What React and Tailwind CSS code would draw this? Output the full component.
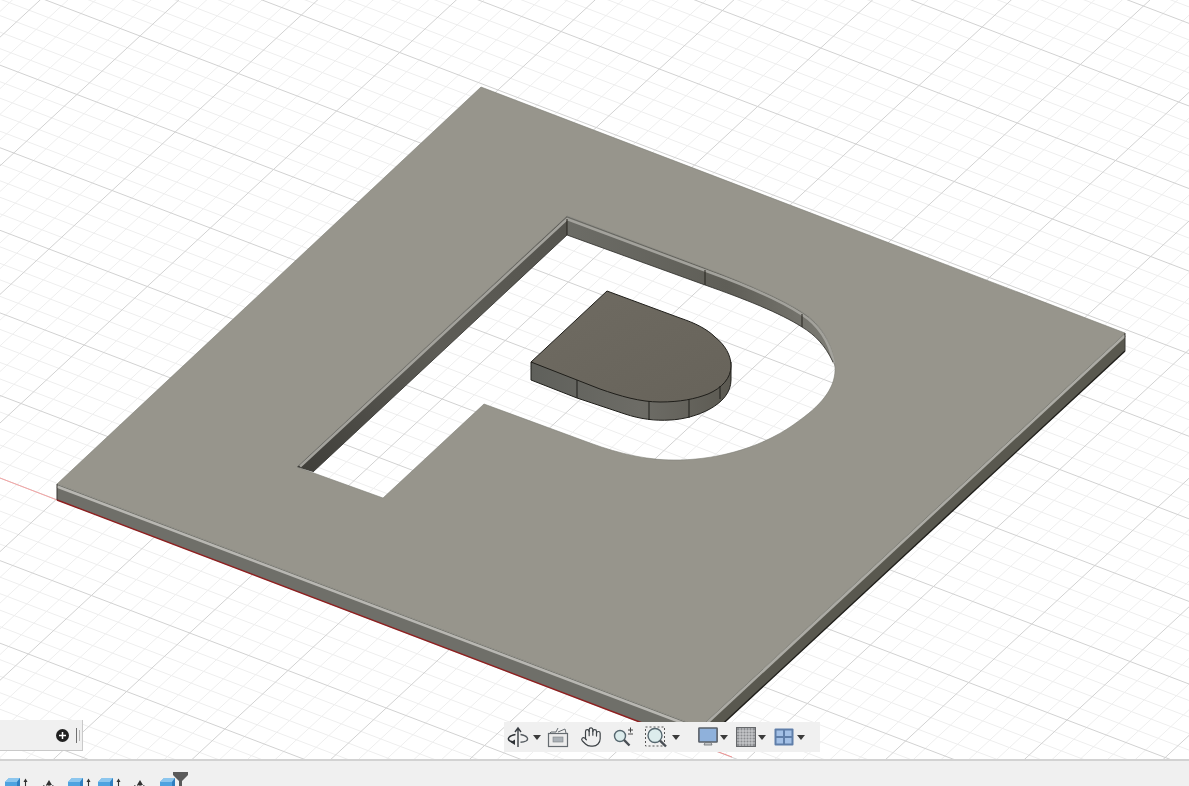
import React from 'react';
import { Hand } from 'lucide-react';

// grid fitted from the reference's major line crossings
const O = [140, 36];
const U = [98.28, 37.5];
const V = [-63.1, 58.5];

function gridLines() {
  const lines = [];
  const pt = (a, b) => [O[0] + U[0] * a + V[0] * b, O[1] + U[1] * a + V[1] * b];
  for (let i = -60; i <= 100; i++) {
    const t = i / 5;
    const major = i % 5 === 0;
    lines.push({ k: 'a' + i, p: [pt(t, -30), pt(t, 30)], major });
    lines.push({ k: 'b' + i, p: [pt(-30, t), pt(30, t)], major });
  }
  return lines;
}

function Scene() {
  const lines = gridLines();
  const plate =
    'M481,87 L1125,333 L700,727 L57,484 Z ' +
    'M567,216 L705,268 C745,283 780,298 802,312 C822,324 833,345 835,367 C836,385 825,402 800,420 C765,447 720,459 680,460 C650,461 620,454 590,443 L484,404 L383,498 L297,467 Z';
  return (
    <svg className="absolute inset-0 blur-[0.4px]" width="1189" height="759" viewBox="0 0 1189 759">
      <defs>
        <linearGradient id="leftWall" x1="0" y1="1" x2="1" y2="0">
          <stop offset="0" stopColor="#3f3e39" />
          <stop offset="0.5" stopColor="#5d5c56" />
          <stop offset="1" stopColor="#55544e" />
        </linearGradient>
        <linearGradient id="topWall" x1="0" y1="0" x2="1" y2="0">
          <stop offset="0" stopColor="#6c6c66" />
          <stop offset="0.6" stopColor="#5f5e57" />
          <stop offset="1" stopColor="#7d7c75" />
        </linearGradient>
        <linearGradient id="islandTop" x1="0" y1="0" x2="1" y2="1">
          <stop offset="0" stopColor="#6f6b62" />
          <stop offset="1" stopColor="#67635a" />
        </linearGradient>
        <linearGradient id="islandSide" x1="0" y1="0" x2="1" y2="0">
          <stop offset="0" stopColor="#5f605b" />
          <stop offset="0.55" stopColor="#6d6c66" />
          <stop offset="1" stopColor="#5c5a52" />
        </linearGradient>
      </defs>

      {lines.filter((l) => !l.major).map((l) => (
        <line key={l.k} x1={l.p[0][0]} y1={l.p[0][1]} x2={l.p[1][0]} y2={l.p[1][1]} stroke="#eeeeee" strokeWidth="1" />
      ))}
      {lines.filter((l) => l.major).map((l) => (
        <line key={l.k} x1={l.p[0][0]} y1={l.p[0][1]} x2={l.p[1][0]} y2={l.p[1][1]} stroke="#d2d2d2" strokeWidth="1" />
      ))}

      {/* red axis */}
      <line x1="0" y1="478" x2="57" y2="500" stroke="#f6a5a5" strokeWidth="1" />
      <line x1="700" y1="745" x2="732" y2="757" stroke="#f09090" strokeWidth="1" />

      {/* plate with the P cut out */}
      <path d="M57,484 L700,727 L700,745 L57,500 Z" fill="#6f6f69" />
      <path d="M1125,333 L700,727 L700,745 L1125,351 Z" fill="#59584f" />
      <path d={plate} fill="#97958c" fillRule="evenodd" stroke="#7e7d76" strokeWidth="0.6" />
      <path d="M57,486.500 L700,729.500" fill="none" stroke="#b8b7b2" strokeWidth="2.600" />
      <path d="M700,729.500 L1125,335.500" fill="none" stroke="#acaba5" strokeWidth="2.600" />
      <path d="M57,500 L700,745" stroke="#8e1f1f" strokeWidth="1.400" />
      <path d="M700,745 L1125,351" stroke="#1f1e1a" strokeWidth="1.400" />
      <path d="M57,484 L57,500 M1125,333 L1125,351" stroke="#3a3934" strokeWidth="1" />

      {/* hole walls */}
      <path d="M297,467 L567,216 L567,235 L313,472 Z" fill="url(#leftWall)" />
      <path d="M567,216 L705,268 C745,283 780,298 802,312 C822,324 833,345 835,367 L833,362 C825,345 815,335 802,327 C780,313 745,299 705,285 L567,235 Z" fill="url(#topWall)" />
      <path d="M300,466.500 L567,219 L705,270.500 C745,285 780,300 802,314.500 C820,326 830,345 834,363" fill="none" stroke="#a3a29c" strokeWidth="2.600" />
      <path d="M567,219 L567,235 M705,270 L705,285 M802,314 L802,327" stroke="#26251f" strokeWidth="1" />
      <path d="M567,235 L705,285 C745,299 780,313 802,327 C815,335 825,345 833,362 M567,235 L313,472" fill="none" stroke="#2c2b27" strokeWidth="0.800" />

      {/* loose piece */}
      <path
        d="M531,362 L531,380 L577,398 L625,414 C640,419 655,421 670,420 C695,419 731,405 731,380 L731,362 Z"
        fill="url(#islandSide)"
        stroke="#1f1e1a"
        strokeWidth="1"
      />
      <path
        d="M607,291 L680,318 C695,323 707,329 715,337 C725,345 731,355 731,366 C731,378 722,388 708,394 C695,399 680,402 660,402 C640,402 620,396 600,389 L531,362 Z"
        fill="url(#islandTop)"
        stroke="#1f1e1a"
        strokeWidth="1"
      />
      <path d="M577,380 L577,398 M649,401 L649,420 M689,399 L689,418 M720,386 L720,399" stroke="#1f1e1a" strokeWidth="1" />
    </svg>
  );
}

function Caret() {
  return (
    <svg width="8" height="5" viewBox="0 0 8 5" className="shrink-0">
      <path d="M0,0 L8,0 L4,5 Z" fill="#3b3b3b" />
    </svg>
  );
}

function OrbitIcon() {
  return (
    <svg width="22" height="22" viewBox="0 0 22 22" fill="none" className="shrink-0">
      <path d="M11,2 L11,21 M8,6 L11,2 L14,6" stroke="#3a3f44" strokeWidth="1.400" />
      <path d="M8.500,8.500 C2,9.500 -0.500,13 3,15 C4.500,15.800 6,16 8,16.200" stroke="#2e3236" strokeWidth="1.500" />
      <path d="M13.500,8.500 C20,9.500 22.500,13 19,15 C17.500,15.800 15.500,16.200 13.500,16.300" stroke="#555b60" strokeWidth="1.400" />
      <path d="M8,13.500 L3.500,16.200 L8,19 Z" fill="#2e3236" />
    </svg>
  );
}

function SectionIcon() {
  return (
    <svg width="22" height="22" viewBox="0 0 22 22" fill="none" className="shrink-0">
      <path d="M3,7 L4,6 L9,6 L11,2 M11,6 L18,3 L19,7" stroke="#656b70" strokeWidth="1" />
      <rect x="1.500" y="7.500" width="19" height="13" fill="#ececec" stroke="#656b70" strokeWidth="1.200" />
      <rect x="6" y="11" width="10" height="5" fill="#aab0b6" stroke="#7d8287" strokeWidth="0.600" />
    </svg>
  );
}

function Magnifier({ cx, cy, r }) {
  const d = r * 0.72;
  return (
    <g>
      <circle cx={cx} cy={cy} r={r} fill="#dcecec" stroke="#56676f" strokeWidth="1.400" />
      <path d={`M${cx + d},${cy + d} L${cx + r + 4},${cy + r + 4}`} stroke="#4a4f55" strokeWidth="2.400" />
    </g>
  );
}

function ZoomIcon() {
  return (
    <svg width="24" height="22" viewBox="0 0 24 22" fill="none" className="shrink-0">
      <Magnifier cx={8} cy={10} r={5.500} />
      <path d="M16,4 L21,4 M18.500,1.500 L18.500,6.500 M16,8 L21,8" stroke="#444" strokeWidth="1" />
    </svg>
  );
}

function FitIcon() {
  return (
    <svg width="24" height="24" viewBox="0 0 24 24" fill="none" className="shrink-0">
      <rect x="1.500" y="2" width="19" height="19" stroke="#555" strokeWidth="1" strokeDasharray="2 2" />
      <Magnifier cx={11} cy={10.500} r={7} />
    </svg>
  );
}

function MonitorIcon() {
  return (
    <svg width="20" height="20" viewBox="0 0 20 20" fill="none" className="shrink-0">
      <rect x="0.900" y="1" width="18.200" height="14" rx="0.500" fill="#8fb1db" stroke="#5a6068" strokeWidth="1.600" />
      <path d="M6,18 L14,18 L13,15.500 L7,15.500 Z" fill="#c4c6c8" stroke="#6a6e72" strokeWidth="0.800" />
    </svg>
  );
}

function GridIcon() {
  const ticks = [4, 7, 10, 13, 16];
  return (
    <svg width="20" height="20" viewBox="0 0 20 20" fill="none" className="shrink-0">
      <rect x="0.500" y="0.500" width="19" height="19" fill="#8b8d90" stroke="#66686b" />
      {ticks.map((t) => (
        <path key={t} d={`M${t},1 L${t},19 M1,${t} L19,${t}`} stroke="#dcdde0" strokeWidth="0.800" />
      ))}
    </svg>
  );
}

function ViewportsIcon() {
  return (
    <svg width="20" height="18" viewBox="0 0 20 18" fill="none" className="shrink-0">
      <rect x="0.500" y="0.500" width="19" height="17" rx="1" fill="#5f7ea9" />
      <rect x="2.500" y="2.500" width="6.500" height="5.500" fill="#a3c0e6" />
      <rect x="11" y="2.500" width="6.500" height="5.500" fill="#a3c0e6" />
      <rect x="2.500" y="10" width="6.500" height="5.500" fill="#a3c0e6" />
      <rect x="11" y="10" width="6.500" height="5.500" fill="#a3c0e6" />
    </svg>
  );
}

function NavBar() {
  return (
    <div className="absolute left-[504px] bottom-[7px] flex h-[30px] w-[316px] items-center bg-[#f0f0f0] pl-[3px]">
      <OrbitIcon />
      <div className="ml-[4px]"><Caret /></div>
      <div className="ml-[6px]"><SectionIcon /></div>
      <Hand size={22} strokeWidth={1.3} color="#3d4246" className="ml-[11px] shrink-0" />
      <div className="ml-[10px]"><ZoomIcon /></div>
      <div className="ml-[8px]"><FitIcon /></div>
      <div className="ml-[4px]"><Caret /></div>
      <div className="ml-[18px]"><MonitorIcon /></div>
      <div className="ml-[2px]"><Caret /></div>
      <div className="ml-[8px]"><GridIcon /></div>
      <div className="ml-[2px]"><Caret /></div>
      <div className="ml-[8px]"><ViewportsIcon /></div>
      <div className="ml-[3px]"><Caret /></div>
    </div>
  );
}

function CommentsPanel() {
  return (
    <div className="absolute left-0 bottom-[8px] flex h-[31px] w-[83px] items-center border-r border-b border-[#c9c9c9] bg-[#f0f0f0]">
      <div className="ml-[56px] flex h-[13px] w-[13px] items-center justify-center rounded-full bg-[#222222] text-white">
        <svg width="9" height="9" viewBox="0 0 9 9">
          <path d="M4.500,1 L4.500,8 M1,4.500 L8,4.500" stroke="#ffffff" strokeWidth="1.500" />
        </svg>
      </div>
      <div className="ml-[7px] h-[15px] w-px bg-[#707070]" />
      <div className="ml-[2px] h-[11px] w-px bg-[#b5b5b5]" />
    </div>
  );
}

function Cube() {
  return (
    <svg width="16" height="14" viewBox="0 0 16 14" className="shrink-0">
      <path d="M0,4 L4,0 L15,0 L15,14 L0,14 Z" fill="#4ea3e0" />
      <path d="M0,4 L4,0 L15,0 L12,4 Z" fill="#8cc6ee" />
      <path d="M12,4 L15,0 L15,14 L12,14 Z" fill="#2f7fc0" />
    </svg>
  );
}

function UpArrow({ wide }) {
  return (
    <svg width={wide ? 14 : 5} height="14" viewBox={wide ? '0 0 14 14' : '0 0 5 14'} fill="none" className="shrink-0">
      {wide ? (
        <>
          <path d="M7,4 L7,14" stroke="#333" strokeWidth="1.200" />
          <path d="M4,7 L7,2 L10,7 Z" fill="#333" />
          <path d="M1,7.500 L13,7.500" stroke="#777" strokeWidth="1" strokeDasharray="1.500 1.500" />
        </>
      ) : (
        <>
          <path d="M2.500,3 L2.500,14" stroke="#333" strokeWidth="1.100" />
          <path d="M0.500,4 L2.500,0.500 L4.500,4 Z" fill="#333" />
        </>
      )}
    </svg>
  );
}

function Timeline() {
  return (
    <div className="relative h-[27px] shrink-0 overflow-hidden border-t-2 border-[#d2d2d2] bg-[#f0f0f0]">
      <div className="flex items-start pt-[17px] pl-[5px]">
        <Cube />
        <div className="ml-[2px]"><UpArrow /></div>
        <div className="ml-[14px]"><UpArrow wide /></div>
        <div className="ml-[12px]"><Cube /></div>
        <div className="ml-[2px]"><UpArrow /></div>
        <div className="ml-[7px]"><Cube /></div>
        <div className="ml-[2px]"><UpArrow /></div>
        <div className="ml-[12px]"><UpArrow wide /></div>
        <div className="ml-[13px]"><Cube /></div>
      </div>
      {/* timeline marker */}
      <svg className="absolute left-[173px] top-[11px]" width="15" height="16" viewBox="0 0 15 16">
        <path d="M0,0 L15,0 L15,3 L9,9 L9,16 L6,16 L6,9 L0,3 Z" fill="#5a5a5a" />
      </svg>
    </div>
  );
}

export default function App() {
  return (
    <div className="flex h-screen w-full flex-col overflow-hidden bg-white font-['Liberation_Sans',sans-serif]">
      <div className="relative flex-1 overflow-hidden bg-white">
        <Scene />
        <CommentsPanel />
        <NavBar />
      </div>
      <Timeline />
    </div>
  );
}
